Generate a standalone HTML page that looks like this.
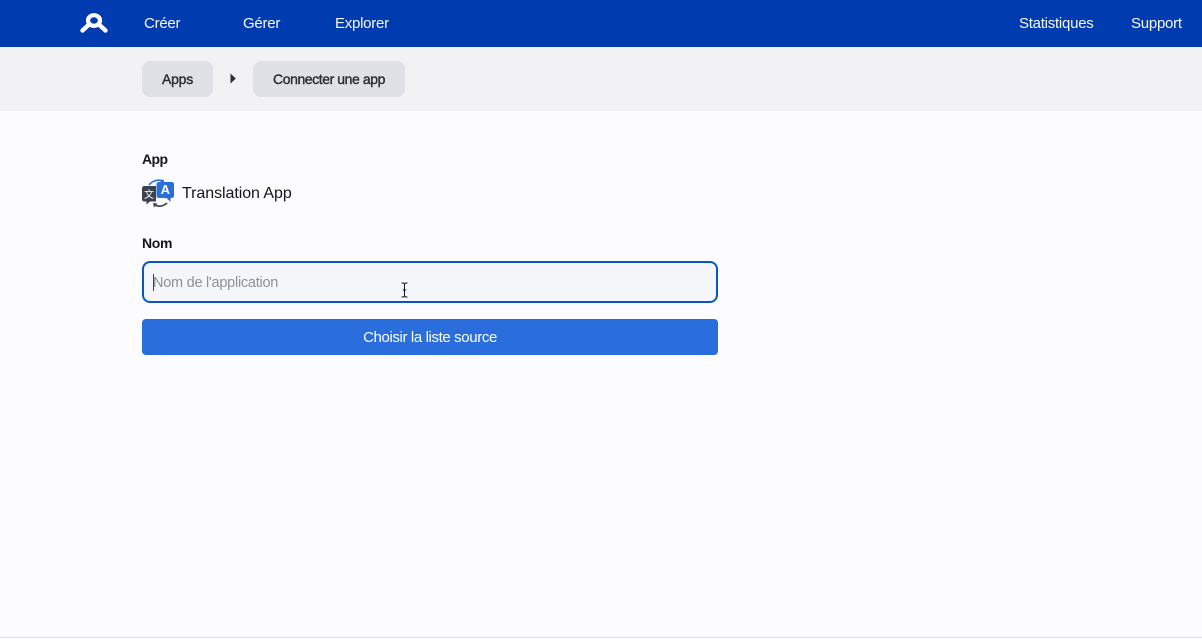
<!DOCTYPE html>
<html lang="fr">
<head>
<meta charset="utf-8">
<title>Connecter une app</title>
<style>
*{box-sizing:border-box}
html,body{margin:0;padding:0}
body{position:relative;width:1202px;height:639px;overflow:hidden;background:#fcfbfe;font-family:"Liberation Sans",sans-serif;color:#15161c}
.a{position:absolute;white-space:nowrap;line-height:20px}
header{position:absolute;left:0;top:0;width:1202px;height:47px;background:#003bb0}
header .a{color:#f7f8fc;font-size:15px;top:14px;letter-spacing:-.25px}
.crumbs{position:absolute;left:0;top:47px;width:1202px;height:64px;background:#f2f2f5}
.chip{position:absolute;top:14px;height:36px;border-radius:8px;background:#dfe1e6;color:#2a2d37;font-size:14px;-webkit-text-stroke:.4px #2a2d37;line-height:36px;text-align:center}
.label{font-size:14px;font-weight:700;color:#15161c}
.input{position:absolute;left:142px;top:261px;width:576px;height:42px;border:2px solid #0a55c6;border-radius:8px;background:#f5f6fa}
.btn{position:absolute;left:142px;top:319px;width:576px;height:36px;border-radius:4px;background:#2a6ddc;color:#fff;font-size:15px;letter-spacing:-.38px;line-height:38px;text-align:center}
.foot{position:absolute;left:0;top:637px;width:1202px;height:1px;background:#dedfe3}
</style>
</head>
<body>
<header>
  <svg class="a" style="left:76px;top:9px" width="36" height="27" viewBox="0 0 36 27"><g fill="none" stroke="#fff" stroke-linecap="round" stroke-linejoin="round"><ellipse cx="18" cy="11.500" rx="6" ry="5.300" stroke-width="4.200"/><path d="M13 15.500 6.500 21.500M23 15.500 29.500 21.500" stroke-width="4.400"/></g></svg>
  <span class="a" style="left:144px">Créer</span>
  <span class="a" style="left:243px">Gérer</span>
  <span class="a" style="left:335px">Explorer</span>
  <span class="a" style="left:1019px">Statistiques</span>
  <span class="a" style="left:1131px">Support</span>
</header>
<div class="crumbs">
  <div class="chip" style="left:142px;width:71px;letter-spacing:-.2px">Apps</div>
  <svg class="a" style="left:230px;top:26px" width="6" height="11" viewBox="0 0 6 11"><path d="M0.500 .5 5.800 5.500 0.500 10.500Z" fill="#2a2d37"/></svg>
  <div class="chip" style="left:253px;width:152px;letter-spacing:-.42px">Connecter une app</div>
</div>
<span class="a label" style="left:142px;top:149px;letter-spacing:-.6px">App</span>
<svg class="a" style="left:142px;top:179px" width="32" height="29" viewBox="0 0 32 29">
  <path d="M7 6C10 2 15 .5 20 1.500" fill="none" stroke="#2a6ddc" stroke-width="1.600"/>
  <path d="M21.500 0 22 3.500 17.500 3.500Z" fill="#2a6ddc"/>
  <path d="M2.500 7H14V22.500H8L4.500 25.500V22.500H2.500C1 22.500 0 21.500 0 20V9.500C0 8 1 7 2.500 7Z" fill="#3c4350"/>
  <path d="M17 3H29.500C31 3 32 4 32 5.500V16.500C32 18 31 19 29.500 19H28.500V23L24.500 19H17C15.500 19 14.500 18 14.500 16.500V5.500C14.500 4 15.500 3 17 3Z" fill="#2a6ddc"/>
  <path d="M25 24C21 27.500 17 28 13 26" fill="none" stroke="#3c4350" stroke-width="1.600"/>
  <path d="M11 24 15.500 24.500 12 28.500Z" fill="#3c4350"/>
  <text x="23.300" y="15" font-size="13" font-weight="700" fill="#fff" text-anchor="middle" font-family="'Liberation Sans',sans-serif">A</text>
  <text x="7" y="19" font-size="10" fill="#fff" text-anchor="middle" font-family="'Noto Sans CJK SC',sans-serif">文</text>
</svg>
<span class="a" style="left:182px;top:184px;font-size:16px;letter-spacing:-.06px;color:#15161c">Translation App</span>
<span class="a label" style="left:142px;top:233px;letter-spacing:-.3px">Nom</span>
<div class="input"></div>
<div class="a" style="left:153px;top:274px;width:1px;height:17px;background:#3c4350"></div>
<span class="a" style="left:153px;top:273px;font-size:14.500px;color:#8d9097;letter-spacing:-.25px">Nom de l'application</span>
<svg class="a" style="left:400px;top:282px" width="9" height="16" viewBox="0 0 9 16"><path d="M1.500 1H3.500L4.500 2 5.500 1H7.500M4.500 2V14M1.500 15H3.500L4.500 14 5.500 15H7.500M2.800 8H6.200" fill="none" stroke="#15161c" stroke-width="1"/></svg>
<div class="btn">Choisir la liste source</div>
<div class="foot"></div>
</body>
</html>
